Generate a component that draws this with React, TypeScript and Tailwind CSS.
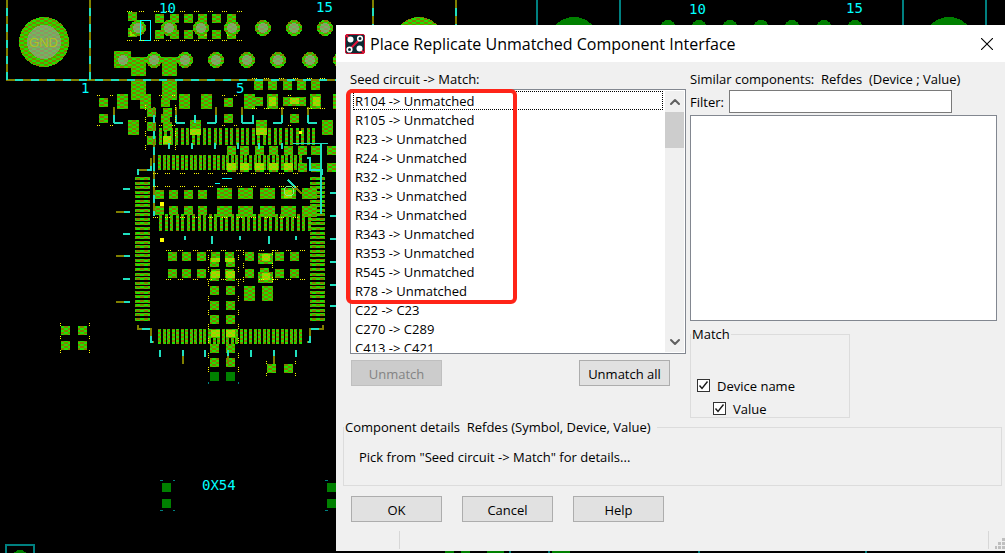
import { Fragment } from "react"
import { ChevronDown, ChevronUp } from "lucide-react"

type Rect = [x: number, y: number, w: number, h: number]

const matches = [
  "R104 -> Unmatched",
  "R105 -> Unmatched",
  "R23 -> Unmatched",
  "R24 -> Unmatched",
  "R32 -> Unmatched",
  "R33 -> Unmatched",
  "R34 -> Unmatched",
  "R343 -> Unmatched",
  "R353 -> Unmatched",
  "R545 -> Unmatched",
  "R78 -> Unmatched",
  "C22 -> C23",
  "C270 -> C289",
  "C413 -> C421",
]

const grid = (xs: number[], ys: number[], w = 9, h = 9): Rect[] =>
  ys.flatMap((y) => xs.map((x): Rect => [x, y, w, h]))

const run = (from: number, to: number, count: number) =>
  Array.from({ length: count }, (_, i) => Math.round(from + ((to - from) * i) / (count - 1)))

const pads: Rect[] = [
  ...grid([128], [12, 28]),
  ...grid([155], [14, 30]),
  ...grid([170, 184, 198, 212, 227], [14, 30]),
  [114, 51, 17, 17],
  ...grid([131, 162], [57, 81], 15, 19),
  ...grid([117, 140, 179, 201, 244, 267, 310, 333], [94], 11, 15),
  ...grid([99, 224], [98, 114]),
  ...grid([147, 163], [108, 122, 136]),
  ...grid([161], [98, 114]),
  ...grid([128, 190, 256, 322], [120], 11, 15),
  ...grid([254, 268, 283, 297, 311], [81]),
  ...grid([254, 283, 290, 297], [97]),
  [290, 114, 9, 9],
  ...grid([227, 240, 255, 269, 284, 298, 311, 327], [146, 163]),
  ...grid([155, 169, 184, 198], [190, 206]),
  ...grid([217, 238, 260, 281, 302], [188, 206], 15, 11),
  ...grid([168, 182, 197, 211, 225, 245, 275, 290], [252, 269]),
  [258, 253, 15, 11],
  [258, 272, 15, 11],
  [260, 268, 9, 5],
  ...grid([210, 226], [258, 272, 286, 301, 315, 329, 344, 358]),
  ...grid([244, 262], [286], 11, 15),
  ...grid([267, 284], [364]),
  ...grid([61, 78], [326, 341]),
]

const pins: Rect[] = [
  ...grid(run(159, 312, 29), [128], 3, 17),
  ...grid(run(158, 299, 32), [155], 3, 15),
  ...grid(run(159, 308, 28), [214], 3, 17),
  ...grid(run(158, 299, 32), [329], 3, 15),
  ...grid([135, 310], run(177, 318, 32), 15, 3),
]

// places where two copper layers overlap
const hotPads: Rect[] = [
  [130, 31, 7, 5],
  [198, 30, 9, 6],
  [227, 30, 9, 6],
  [163, 136, 8, 8],
  [269, 97, 7, 9],
  [313, 97, 7, 9],
  [290, 98, 9, 6],
  [256, 128, 11, 7],
  [190, 129, 11, 6],
  ...grid([227, 240, 255, 269, 284], [163], 9, 7),
  [284, 190, 8, 8],
  ...grid([211, 225], [258], 9, 4),
  ...grid([211, 226], [271, 330], 9, 7),
  [262, 254, 8, 7],
  [262, 273, 8, 7],
]

const dimPads: Rect[] = [...grid([210, 226], [372]), ...grid([162, 327], [483, 499])]

const vias = [
  ...[138, 169, 201, 232, 263, 294, 325].map((x) => [x, 28]),
  ...[154, 185, 216, 247, 278, 310, 341].map((x) => [x, 60]),
]

const traces = [
  "M7 0V80H336",
  "M90 0V80",
  "M373 0V25",
  "M456 0V25",
  "M154 107V216",
  "M151 158V170H138V175",
  "M138 325V329H151V342H154",
  "M323 325V329H310V342H307",
  ...[114, 176, 216, 242, 282, 308].map((x) => `M${x} 107V123`),
  "M116 212H130",
  "M116 256H130",
  "M116 302H130",
  ...[183, 228, 274].map((x) => `M${x} 364V350`),
]

const ticks = [
  ...[114, 176, 242, 308].map((x) => `M${x} 123H${x + 9}`),
  ...[216, 282].map((x) => `M${x} 123H${x - 9}`),
  ...[195, 253].map((x) => `M${x} 115V123h${x === 195 ? 0 : -9}`),
  ...[189, 234, 279].map((y) => `M123 ${y}H130`),
  ...[193, 216, 239, 262, 285, 306].map((y) => `M330 ${y}H336`),
  ...[160, 205, 251, 296].map((x) => `M${x} 350V357`),
  ...[185, 240, 296].map((x) => `M${x} 236V240`),
  ...[212, 269].map((x) => `M${x} 236V244`),
  ...[169, 192, 215, 238, 259, 282].map((x) => `M${x} 143V149`),
  "M307 158H310V170H322V175",
  "M321 143V214",
  "M288 180L296 188",
]

const silkDots = [
  ...[11, 40].flatMap((y) => [127, 139, 154, 166, 180, 194, 208, 222, 237].map((x) => `M${x} ${y}.5h5`)),
  ...[95, 125].flatMap((y) => [97, 110, 159, 172, 222, 234, 288].map((x) => `M${x} ${y}.5h3`)),
  ...[78, 108].flatMap((y) => [252, 264, 279, 293, 307, 320].map((x) => `M${x} ${y}.5h5`)),
  ...[173, 186, 217].flatMap((y) => [153, 165, 180, 194, 208, 222, 237, 251, 265, 279, 293].map((x) => `M${x} ${y}.5h5`)),
  ...[250, 279].flatMap((y) => [166, 178, 193, 207, 221, 236, 259, 273, 286, 300].map((x) => `M${x} ${y}.5h5`)),
  ...[208, 238].flatMap((x) => [255, 267, 281, 296, 310, 324, 338, 353, 367].map((y) => `M${x}.5 ${y}v5`)),
  ...[60, 89].flatMap((x) => [323, 336, 350].map((y) => `M${x}.5 ${y}v4`)),
  ...[145, 175].flatMap((x) => [105, 117, 131, 145].map((y) => `M${x}.5 ${y}v5`)),
  ...[243, 272].flatMap((x) => [250, 263, 277].map((y) => `M${x}.5 ${y}v5`)),
  ...[266, 295].flatMap((x) => [361, 373].map((y) => `M${x}.5 ${y}v4`)),
]

const Rects = ({ items, fill }: { items: Rect[]; fill: string }) => (
  <g fill={fill}>
    {items.map(([x, y, width, height], i) => (
      <rect key={i} x={x} y={y} width={width} height={height} />
    ))}
  </g>
)

const Board = () => (
  <svg className="absolute inset-0 size-full" shapeRendering="crispEdges" aria-label="Board layout">
    <defs>
      <pattern id="copper" width="8" height="4" patternUnits="userSpaceOnUse">
        <rect width="8" height="4" fill="#808000" />
        <path d="M0 0h4v2h-4zM4 2h4v2h-4z" fill="#20e000" />
      </pattern>
      <pattern id="overlap" width="8" height="4" patternUnits="userSpaceOnUse">
        <rect width="8" height="4" fill="#c0c000" />
        <path d="M0 0h4v2h-4zM4 2h4v2h-4z" fill="#70f000" />
      </pattern>
    </defs>

    <circle cx="44" cy="42" r="25" fill="url(#copper)" />
    <circle cx="44" cy="42" r="17" fill="#a0a0a0" fillOpacity="0.6" />
    <circle cx="419" cy="42" r="25" fill="url(#copper)" />
    <Rects items={pads} fill="url(#copper)" />
    <Rects items={pins} fill="url(#copper)" />
    <Rects items={hotPads} fill="url(#overlap)" />
    {vias.map(([x, y]) => (
      <Fragment key={`${x}-${y}`}>
        <circle cx={x} cy={y} r="8" fill="url(#copper)" />
        <circle cx={x} cy={y} r="5" fill="#a0a0a0" fillOpacity="0.6" />
      </Fragment>
    ))}
    <circle cx="123" cy="60" r="5" fill="#a0a0a0" fillOpacity="0.6" />

    <g fill="none" strokeWidth="2">
      <path d={traces.join("")} stroke="#808000" />
      <path d={traces.join("")} stroke="#20e0c0" strokeDasharray="8 8" strokeDashoffset="8" />
      <path d={ticks.join("")} stroke="#20e0c0" />
      <path d="M296 188L302 194" stroke="#808000" />
      <path d="M293 143.5H328" stroke="#20e0c0" strokeWidth="1" />
      <circle cx="289" cy="191" r="5" stroke="#80f080" strokeWidth="1" />
      <path d="M222 178.5h10M215 183.5h5" stroke="#00ffff" strokeWidth="1" />
      <path d="M140.5 20.5h10v20h-10z" stroke="#00ffff" strokeWidth="1" />
      <path d={silkDots.join("")} stroke="#ffff00" strokeWidth="1" strokeDasharray="1 1" />
    </g>
    <path d="M160 202h4v4h-4zM160 238h4v4h-4zM299 131h3v3h-3z" fill="#ffff00" />

    {/* parts outside the selection are drawn dimmed */}
    <Rects items={dimPads} fill="#008000" />
    <g fill="#008000">
      <circle cx="574" cy="42" r="25" />
      <circle cx="949" cy="42" r="25" />
      <circle cx="20" cy="558" r="8" />
      {[668, 699, 730, 761, 792, 824, 855].map((x) => (
        <circle key={x} cx={x} cy="28" r="8" />
      ))}
      <path d="M445 551h9v2h-9zM461 551h9v2h-9zM487 551h17v2h-17zM552 551h18v2h-18z" />
    </g>
    <g fill="none" stroke="#008080" strokeWidth="2">
      <path d="M537 0V25M620 0V25M903 0V25M986 0V25M6 553V545H34V553M510 551v2M549 551v2M699 551v2M866 551v2" />
      <path
        d="M160 480.5h3M173 480.5h2M160 510.5h3M173 510.5h2M325 480.5h3M325 510.5h3M208.5 382v2M238.5 382v2"
        strokeWidth="1"
      />
    </g>

    <g className="font-['DejaVu_Sans_Mono',monospace] text-[14px]" fill="#00ffff">
      <text x="159" y="13">10</text>
      <text x="316" y="12">15</text>
      <text x="689" y="14">10</text>
      <text x="846" y="13">15</text>
      <text x="81" y="93">1</text>
      <text x="236" y="93">5</text>
      <text x="202" y="490">0X54</text>
    </g>
    <text x="29" y="47" className="font-['Liberation_Sans',sans-serif] text-[13px]" fill="#b0c020">
      GND
    </text>
  </svg>
)

const AppIcon = () => (
  <svg viewBox="0 0 20 20" className="size-5 shrink-0" aria-hidden="true">
    <rect x="0.5" y="0.5" width="19" height="19" rx="1.5" fill="#0c2a33" stroke="#c8102e" />
    <path d="M1 1L5 5M15 15L19 19M5 15L15 5" stroke="#e4153a" strokeWidth="2" />
    <circle cx="5.5" cy="5.5" r="3" fill="#fff" />
    <circle cx="14.5" cy="14.5" r="3" fill="#fff" />
    <circle cx="15" cy="4.5" r="2.3" fill="#0c2a33" stroke="#fff" strokeWidth="1.6" />
    <circle cx="4.5" cy="15.5" r="2.3" fill="#0c2a33" stroke="#fff" strokeWidth="1.6" />
  </svg>
)

const Button = ({ label, disabled = false }: { label: string; disabled?: boolean }) => (
  <button
    type="button"
    disabled={disabled}
    className="h-[26px] w-[91px] border border-[#adadad] bg-[#e1e1e1] pt-0.5 disabled:border-[#bfbfbf] disabled:bg-[#cccccc] disabled:text-[#838383]"
  >
    {label}
  </button>
)

const Checkbox = ({ label }: { label: string }) => (
  <label className="flex h-[23px] items-center gap-[7px]">
    <span className="relative size-[13px]">
      <input type="checkbox" defaultChecked className="peer block size-[13px] appearance-none border border-[#333333] bg-white" />
      <svg viewBox="0 0 13 13" className="pointer-events-none absolute inset-0 hidden peer-checked:block">
        <path d="M2.5 6.5L5 9.5L10.5 2.5" fill="none" stroke="#1a1a1a" strokeWidth="1.4" />
      </svg>
    </span>
    <span className="pt-0.5">{label}</span>
  </label>
)

const MatchList = () => (
  <div className="relative">
    <div className="flex h-[265px] border border-[#828790] bg-white p-px">
      <ul role="listbox" aria-labelledby="seed-label" className="grow overflow-hidden pr-0.5 pl-px">
        {matches.map((match, i) => (
          <li
            key={match}
            role="option"
            aria-selected={false}
            className={`flex h-[19px] items-center border border-dotted px-px pt-0.5 ${i === 0 ? "border-black" : "border-transparent"}`}
          >
            {match}
          </li>
        ))}
      </ul>
      <div className="flex w-[19px] shrink-0 flex-col justify-between bg-[#f0f0f0] text-[#606060]">
        <div>
          <button type="button" aria-label="Scroll up" className="flex h-[21px] w-full items-center justify-center">
            <ChevronUp className="size-4" strokeWidth={3} />
          </button>
          <div className="h-9 bg-[#cdcdcd]" />
        </div>
        <button type="button" aria-label="Scroll down" className="flex h-[21px] w-full items-center justify-center">
          <ChevronDown className="size-4" strokeWidth={3} />
        </button>
      </div>
    </div>
    <div className="pointer-events-none absolute top-0 -left-1 h-[215px] w-[171px] rounded-md border-4 border-[#ff2418]" />
  </div>
)

const ReplicateDialog = () => (
  <section
    role="dialog"
    aria-labelledby="dialog-title"
    className="relative bg-[#f0f0f0] font-['Open_Sans','Noto_Sans',sans-serif] text-[13px] leading-[19px] text-black"
  >
    <header className="flex h-[37px] items-center gap-[5px] bg-white pr-3 pl-[9px]">
      <AppIcon />
      <h1 id="dialog-title" className="grow text-base">
        Place Replicate Unmatched Component Interface
      </h1>
      <button type="button" aria-label="Close">
        <svg viewBox="0 0 12 12" className="size-3">
          <path d="M0 0L12 12M12 0L0 12" stroke="#000" strokeWidth="1.1" />
        </svg>
      </button>
    </header>

    <div className="grid grid-cols-[336px_minmax(0,1fr)] gap-x-1 pt-2 pr-2 pl-3.5">
      <div>
        <p id="seed-label">{"Seed circuit -> Match:"}</p>
        <MatchList />
        <div className="mt-1.5 flex justify-between pr-4 pl-px">
          <Button label="Unmatch" disabled />
          <Button label="Unmatch all" />
        </div>
      </div>

      <div>
        <p className="whitespace-pre">Similar components:  Refdes  (Device ; Value)</p>
        <div className="mt-px flex items-center">
          <label htmlFor="filter" className="w-[39px] pt-0.5">
            Filter:
          </label>
          <input id="filter" type="text" className="h-[23px] w-[223px] border border-[#7a7a7a] bg-white px-1 outline-none" />
        </div>
        <div role="listbox" aria-label="Similar components" className="mt-0.5 h-[206px] border border-[#828790] bg-white" />
        <fieldset className="mt-1 h-[93px] w-40 border border-[#dcdcdc] pl-1.5">
          <legend className="-ml-1.5 px-px">Match</legend>
          <div className="pt-[30px]">
            <Checkbox label="Device name" />
            <div className="pl-4">
              <Checkbox label="Value" />
            </div>
          </div>
        </fieldset>
      </div>
    </div>

    <fieldset className="mr-[3px] ml-[7px] h-[68px] border border-[#dcdcdc] pl-[15px]">
      <legend className="-ml-[15px] pr-1.5 pl-px whitespace-pre">Component details  Refdes (Symbol, Device, Value)</legend>
      <p className="pt-[11px]">{'Pick from "Seed circuit -> Match" for details...'}</p>
    </fieldset>

    <div className="mt-2.5 flex gap-5 pl-[15px]">
      <Button label="OK" />
      <Button label="Cancel" />
      <Button label="Help" />
    </div>

    <footer className="mt-2 flex h-[21px] items-end justify-between pb-0.5">
      <div className="h-[18px] w-16 border-r border-[#d7d7d7]" />
      <div className="flex h-[18px] items-end border-l border-[#d7d7d7] pl-1.5">
        <svg viewBox="0 0 10 11" className="h-[11px] w-2.5" shapeRendering="crispEdges" aria-hidden="true">
          <path d="M0 8h2v3H0zM3 8h3v3H3zM7 8h3v3H7zM3 4h3v3H3zM7 4h3v3H7zM7 0h3v3H7z" fill="#bfbfbf" />
        </svg>
      </div>
    </footer>
  </section>
)

const App = () => {
  return (
    <main className="relative min-h-screen overflow-hidden bg-black pt-[25px] pl-[336px]">
      <Board />
      <ReplicateDialog />
    </main>
  )
}

export default App
